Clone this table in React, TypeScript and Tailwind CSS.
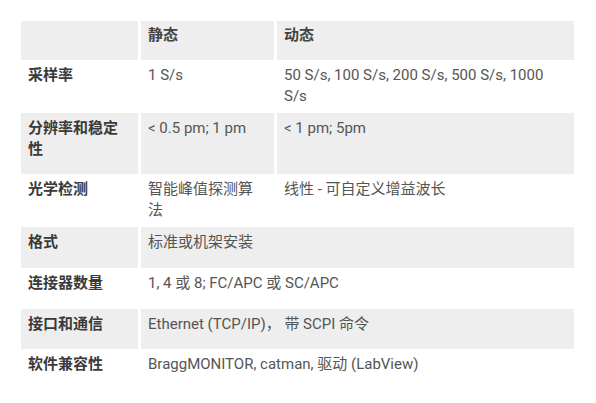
const rows: { label: string; cells: string[]; h: string; gray: boolean }[] = [
  { label: '采样率', cells: ['1 S/s', '50 S/s, 100 S/s, 200 S/s, 500 S/s, 1000 S/s'], h: 'h-[53px]', gray: false },
  { label: '分辨率和稳定性', cells: ['< 0.5 pm; 1 pm', '< 1 pm; 5pm'], h: 'h-[61px]', gray: true },
  { label: '光学检测', cells: ['智能峰值探测算法', '线性 - 可自定义增益波长'], h: 'h-[53px]', gray: false },
  { label: '格式', cells: ['标准或机架安装'], h: 'h-[41px]', gray: true },
  { label: '连接器数量', cells: ['1, 4 或 8; FC/APC 或 SC/APC'], h: 'h-[41px]', gray: false },
  { label: '接口和通信', cells: ['Ethernet (TCP/IP)， 带 SCPI 命令'], h: 'h-[40px]', gray: true },
  { label: '软件兼容性', cells: ['BraggMONITOR, catman, 驱动 (LabView)'], h: 'h-[41px]', gray: false },
];

export default function App() {
  return (
    <div
      className="w-[596px] h-[403px] bg-white pt-[21px] pl-[21px] text-[15px] leading-[21px]"
      style={{ fontFamily: 'Roboto, "Noto Sans CJK SC", sans-serif' }}
    >
      <div className="grid w-[553px] grid-cols-[117px_133px_297px] gap-x-[3px]">
        <div className="h-[39px] bg-[#eeeeee]" />
        <div className="h-[39px] bg-[#eeeeee] px-[7px] pt-[4px] font-bold text-[#444]">静态</div>
        <div className="h-[39px] bg-[#eeeeee] px-[7px] pt-[4px] font-bold text-[#444]">动态</div>
        {rows.map((r) => {
          const bg = r.gray ? 'bg-[#eeeeee]' : 'bg-white';
          return (
            <div key={r.label} className="contents">
              <div className={`${r.h} ${bg} px-[7px] pt-[5px] font-bold text-[#3a3a3a]`}>{r.label}</div>
              {r.cells.length === 2 ? (
                <>
                  <div className={`${r.h} ${bg} px-[7px] pt-[5px] text-[#555]`}>{r.cells[0]}</div>
                  <div className={`${r.h} ${bg} px-[7px] pt-[5px] text-[#555]`}>{r.cells[1]}</div>
                </>
              ) : (
                <div className={`${r.h} ${bg} col-span-2 px-[7px] pt-[5px] text-[#555]`}>{r.cells[0]}</div>
              )}
            </div>
          );
        })}
      </div>
    </div>
  );
}
